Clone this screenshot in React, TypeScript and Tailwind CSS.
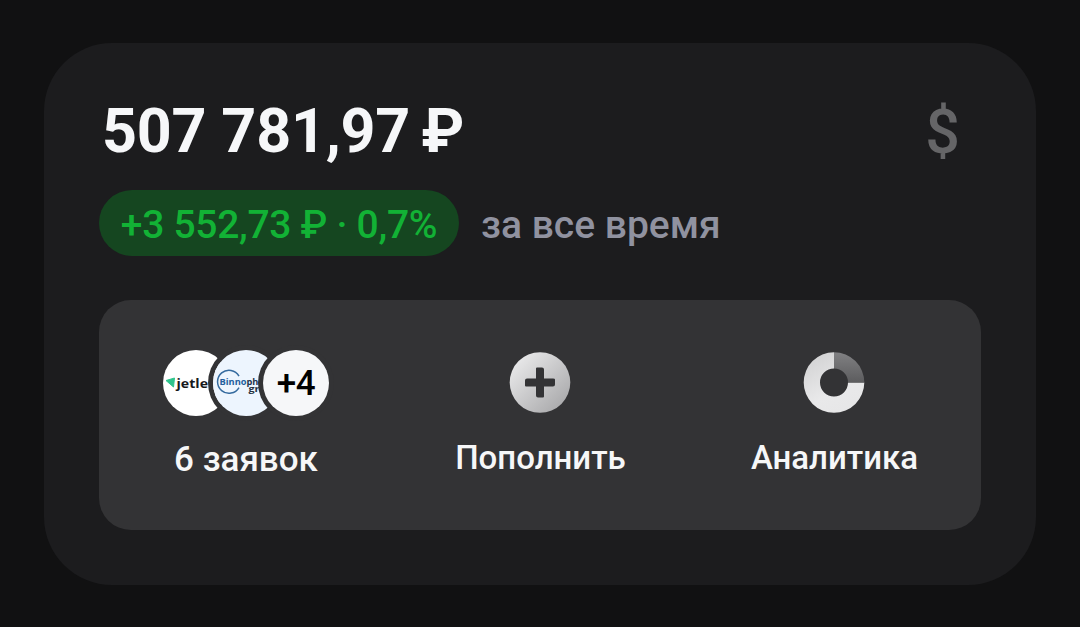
import type { ReactNode } from "react";

type ActionProps = {
  label: string;
  labelClassName: string;
  children: ReactNode;
};

function Action({ label, labelClassName, children }: ActionProps) {
  return (
    <button
      type="button"
      className="flex flex-1 flex-col items-center pt-[49px] text-[#f6f7f8]"
    >
      <span className="flex h-[67px] items-center">{children}</span>
      <span className={`whitespace-nowrap font-medium ${labelClassName}`}>
        {label}
      </span>
    </button>
  );
}

function JetlendLogo() {
  return (
    <svg viewBox="0 0 66 66" className="size-[66px] rounded-full bg-white">
      <path d="M3 30.500 11.500 28 10.500 37Z" fill="#2fc48d" stroke="#2fc48d" strokeLinejoin="round" />
      <text
        x="13.500"
        y="37.500"
        textLength="31.500"
        lengthAdjust="spacingAndGlyphs"
        className="fill-[#17191c] font-['Open_Sans',sans-serif] text-[13px] font-bold"
      >
        jetle
      </text>
    </svg>
  );
}

function BinnopharmLogo() {
  return (
    <svg viewBox="0 0 66 66" className="size-[66px] rounded-full bg-[#edf5fe]">
      <path
        d="M26 26A11.500 11.500 0 1 0 26 37.500"
        fill="none"
        stroke="#356b9f"
        strokeWidth="1.500"
      />
      <text
        x="6.500"
        y="35"
        textLength="39"
        lengthAdjust="spacingAndGlyphs"
        className="fill-[#245f9d] font-['Open_Sans',sans-serif] text-[9px] font-bold"
      >
        Binno<tspan className="fill-[#26364d]">ph</tspan>
      </text>
      <text
        x="35.500"
        y="42"
        textLength="11"
        lengthAdjust="spacingAndGlyphs"
        className="fill-[#26303f] font-['Open_Sans',sans-serif] text-[9px] leading-none font-bold"
      >
        gr
      </text>
    </svg>
  );
}

function PlusIcon() {
  return (
    <svg viewBox="0 0 62 62" className="size-[62px]">
      <defs>
        <linearGradient id="plus" x1="0.1" y1="0.1" x2="0.9" y2="0.9">
          <stop stopColor="#eaeaeb" />
          <stop offset="1" stopColor="#a9a9ab" />
        </linearGradient>
      </defs>
      <circle cx="31" cy="30.500" r="30.300" fill="url(#plus)" />
      <path
        d="M27 16.500q0-1 1-1h5q2 0 2 2v9h9q2 0 2 1v5q0 2-2 2h-9v10q0 1-1 1h-5q-2 0-2-2v-9h-10q-1 0-1-1v-5q0-2 2-2h9Z"
        fill="#333335"
      />
    </svg>
  );
}

function ChartIcon() {
  return (
    <svg viewBox="0 0 62 62" className="size-[62px]">
      <defs>
        <linearGradient id="ring" x1="0.8" y1="1" x2="0.2" y2="0">
          <stop stopColor="#e6e6e7" />
          <stop offset="0.4" stopColor="#e9e9ea" />
          <stop offset="1" stopColor="#d2d2d3" />
        </linearGradient>
        <linearGradient id="slice" x1="0" y1="1" x2="0" y2="0">
          <stop stopColor="#5c5c5e" />
          <stop offset="1" stopColor="#818183" />
        </linearGradient>
      </defs>
      <path
        d="M31 .2A30.300 30.300 0 1 0 61.300 30.500H45A14 14 0 1 1 31 16.500Z"
        fill="url(#ring)"
      />
      <path
        d="M31 .2A30.300 30.300 0 0 1 61.300 30.500H45A14 14 0 0 0 31 16.500Z"
        fill="url(#slice)"
      />
    </svg>
  );
}

function Requests() {
  return (
    <span className="flex">
      <JetlendLogo />
      <span className="relative -ml-4 rounded-full ring-[5px] ring-[#333335]">
        <BinnopharmLogo />
      </span>
      <span className="relative -ml-4 flex size-[66px] items-center justify-center rounded-full bg-[#f6f7f9] pt-[3px] text-[35px] leading-10 font-medium tracking-[-0.5px] text-black ring-[5px] ring-[#333335]">
        +4
      </span>
    </span>
  );
}

export default function App() {
  return (
    <main className="h-[627px] w-[1080px] bg-[#111112] px-11 pt-[43px] font-[Roboto,sans-serif]">
      <section className="h-[542px] rounded-[68px] bg-[#1c1c1e] px-[55px] pt-[52px]">
        <header className="flex h-[72px] items-center justify-between pl-[3px] pr-[21px]">
          <h1 className="flex gap-[11px] text-[61px] leading-[72px] font-bold tracking-[-0.2px] text-[#f6f7f9]">
            <span>507 781,97</span>
            <span>₽</span>
          </h1>
          <span className="pt-0.5 text-[61px] leading-[72px] font-medium text-[#656567]">
            $
          </span>
        </header>

        <div className="mt-[23px] flex h-[66px] items-center gap-[22px] text-[39px] leading-[48px] font-medium">
          <span className="flex h-[66px] w-[360px] items-center justify-center whitespace-nowrap rounded-full bg-[#154620] pt-[3px] tracking-[-0.3px] text-[#12b235]">
            +3 552,73 ₽ · 0,7%
          </span>
          <span className="whitespace-nowrap pt-1 text-[#9092a0]">
            за все время
          </span>
        </div>

        <nav className="mt-11 flex h-[230px] rounded-[32px] bg-[#333335]">
          <Action label="6 заявок" labelClassName="mt-[23px] text-[35px] leading-[42px]">
            <Requests />
          </Action>
          <Action label="Пополнить" labelClassName="mt-[21px] pl-px text-[33px] leading-[42px]">
            <PlusIcon />
          </Action>
          <Action label="Аналитика" labelClassName="mt-[21px] pl-px text-[33px] leading-[42px]">
            <ChartIcon />
          </Action>
        </nav>
      </section>
    </main>
  );
}
